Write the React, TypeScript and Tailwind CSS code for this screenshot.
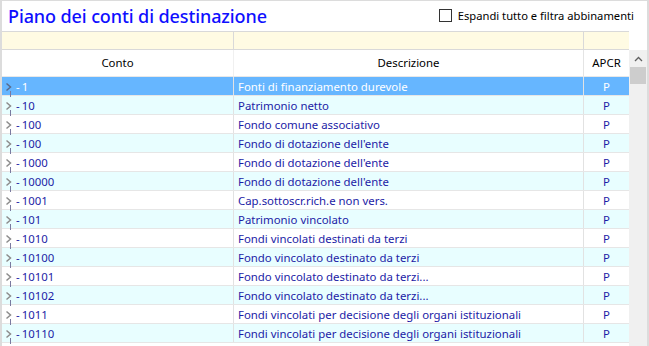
import React from 'react';

const rows = [
  { conto: '1', desc: 'Fonti di finanziamento durevole' },
  { conto: '10', desc: 'Patrimonio netto' },
  { conto: '100', desc: 'Fondo comune associativo' },
  { conto: '100', desc: "Fondo di dotazione dell'ente" },
  { conto: '1000', desc: "Fondo di dotazione dell'ente" },
  { conto: '10000', desc: "Fondo di dotazione dell'ente" },
  { conto: '1001', desc: 'Cap.sottoscr.rich.e non vers.' },
  { conto: '101', desc: 'Patrimonio vincolato' },
  { conto: '1010', desc: 'Fondi vincolati destinati da terzi' },
  { conto: '10100', desc: 'Fondo vincolato destinato da terzi' },
  { conto: '10101', desc: 'Fondo vincolato destinato da terzi...' },
  { conto: '10102', desc: 'Fondo vincolato destinato da terzi...' },
  { conto: '1011', desc: 'Fondi vincolati per decisione degli organi istituzionali' },
  { conto: '10110', desc: 'Fondi vincolati per decisione degli organi istituzionali' },
];

function Chevron({ white }: { white?: boolean }) {
  return (
    <svg width="8" height="10" viewBox="0 0 8 10" className="shrink-0">
      <path d="M1.5 1.5 L5.5 5 L1.5 8.5" fill="none" stroke={white ? '#5a6a8a' : '#8c8c8c'} strokeWidth="1.5" />
    </svg>
  );
}

export default function App() {
  return (
    <div
      className="w-[649px] h-[346px] overflow-hidden bg-white border-t border-l-2 border-r-2 border-[#dcdcdc] flex flex-col"
      style={{ fontFamily: '"Noto Sans", "Open Sans", sans-serif' }}
    >
      <div className="h-[30px] flex items-center justify-between pl-[6px] pr-[13px] shrink-0">
        <h1 className="text-[18px] leading-none text-[#0f0fff] font-medium tracking-[-0.1px]">Piano dei conti di destinazione</h1>
        <label className="flex items-center gap-[6px] text-[11.2px] text-black">
          <span className="w-[13px] h-[13px] border border-[#333] bg-white" />
          Espandi tutto e filtra abbinamenti
        </label>
      </div>
      <div className="flex flex-1 min-h-0">
        <div className="w-[627px] flex flex-col text-[11.4px]">
          <div className="h-[19px] flex bg-[#fffbe3] border-y border-[#d9d9d9] shrink-0">
            <div className="w-[232px] border-r border-[#d9d9d9]" />
            <div className="w-[350px] border-r border-[#d9d9d9]" />
            <div className="flex-1" />
          </div>
          <div className="h-[27px] flex items-center border-b border-[#e8e8e8] text-black shrink-0">
            <div className="w-[232px] h-full flex items-center justify-center border-r border-[#f0f0f0]">Conto</div>
            <div className="w-[350px] h-full flex items-center justify-center border-r border-[#e4e4e4]">Descrizione</div>
            <div className="flex-1 h-full flex items-center justify-center">APCR</div>
          </div>
          {rows.map((r, i) => {
            const sel = i === 0;
            const bg = sel ? 'bg-[#66b6ff] text-white' : i % 2 === 1 ? 'bg-[#e8feff] text-[#1c1ca6]' : 'bg-white text-[#1c1ca6]';
            return (
              <div key={i} className={`h-[19px] flex shrink-0 border-b border-[#e6e6e6] ${bg}`}>
                <div className="w-[232px] h-full flex items-center border-r border-[#e2e2e2] pl-[3px] pt-[1px] relative">
                  <span className="absolute left-[8px] top-[14px] h-[6px] border-l border-dashed border-[#7a7aa0]" />
                  <Chevron white={sel} />
                  <span className="ml-[3px]">-</span>
                  <span className="ml-[2px]">{r.conto}</span>
                </div>
                <div className="w-[350px] h-full flex items-center border-r border-[#e2e2e2] pl-[4px] pt-[1px] whitespace-nowrap overflow-hidden">
                  {r.desc}
                </div>
                <div className="flex-1 h-full flex items-center justify-center pt-[1px]">P</div>
              </div>
            );
          })}
        </div>
        <div className="flex-1 flex flex-col bg-[#f0f0f0] mt-[19px]">
          <div className="h-[17px] flex items-center justify-center">
            <svg width="9" height="6" viewBox="0 0 9 6">
              <path d="M1 5 L4.5 1.5 L8 5" fill="none" stroke="#606060" strokeWidth="1.3" />
            </svg>
          </div>
          <div className="mx-[1px] h-[17px] bg-[#cdcdcd]" />
        </div>
      </div>
    </div>
  );
}
